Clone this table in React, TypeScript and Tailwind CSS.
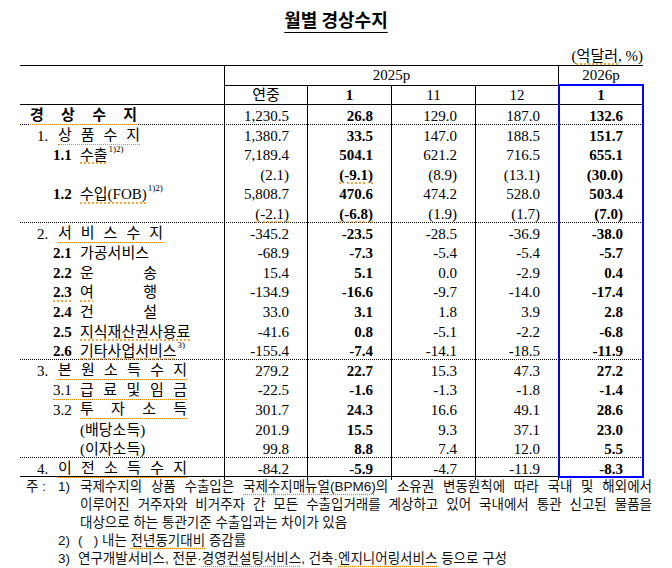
import React from "react";

const SERIF = "[font-family:'Liberation_Serif','Noto_Sans_CJK_KR',serif]";
const SANS = "[font-family:'Liberation_Sans','Noto_Sans_CJK_KR',sans-serif]";
// 맞춤법 검사 표시(주황 점선)
const SQ = "underline decoration-dotted decoration-[#f08a00] underline-offset-[3px]";
const SQB = "border-b border-dotted border-[#f08a00]";

type Sep = "dot" | "solid" | undefined;

interface Row {
  label: React.ReactNode;
  v: string[];
  sep?: Sep;
  sq?: number[];
}

function Spread({ text, w, sq, bold }: { text: string; w: string; sq?: boolean; bold?: boolean }) {
  return (
    <span className={`flex justify-between leading-[17px] ${w} ${sq ? SQB : ""} ${bold ? "font-bold" : ""}`}>
      {Array.from(text).map((c, i) => (
        <span key={i}>{c}</span>
      ))}
    </span>
  );
}

const L1 = ({ n, children }: { n: string; children: React.ReactNode }) => (
  <div className="flex items-center pl-[17px]">
    <span className="w-[21px]">{n}</span>
    {children}
  </div>
);

const L2 = ({ n, children, sqn }: { n?: string; children: React.ReactNode; sqn?: boolean }) => (
  <div className="flex items-center pl-[33px]">
    <span className={`w-[27px] font-bold ${sqn ? SQ : ""}`}>{n}</span>
    {children}
  </div>
);

const Sup = ({ t }: { t: string }) => <span className="text-[9px] relative -top-[6px] ml-[1px]">{t}</span>;

const rows: Row[] = [
  {
    label: (
      <div className="pl-[10px]">
        <Spread text="경상수지" w="w-[107px]" sq bold />
      </div>
    ),
    v: ["1,230.5", "26.8", "129.0", "187.0", "132.6"],
    sep: "dot",
  },
  {
    label: (
      <L1 n="1.">
        <Spread text="상품수지" w="w-[82px]" sq />
      </L1>
    ),
    v: ["1,380.7", "33.5", "147.0", "188.5", "151.7"],
  },
  {
    label: (
      <L2 n="1.1">
        <span className={SQ}>수출</span>
        <Sup t="1)2)" />
      </L2>
    ),
    v: ["7,189.4", "504.1", "621.2", "716.5", "655.1"],
  },
  { label: null, v: ["(2.1)", "(-9.1)", "(8.9)", "(13.1)", "(30.0)"], sq: [1] },
  {
    label: (
      <L2 n="1.2">
        <span className={SQ}>수입(FOB)</span>
        <Sup t="1)2)" />
      </L2>
    ),
    v: ["5,808.7", "470.6", "474.2", "528.0", "503.4"],
  },
  { label: null, v: ["(-2.1)", "(-6.8)", "(1.9)", "(1.7)", "(7.0)"], sep: "dot", sq: [0, 1] },
  {
    label: (
      <L1 n="2.">
        <Spread text="서비스수지" w="w-[105px]" sq />
      </L1>
    ),
    v: ["-345.2", "-23.5", "-28.5", "-36.9", "-38.0"],
  },
  {
    label: (
      <L2 n="2.1">
        <span>가공서비스</span>
      </L2>
    ),
    v: ["-68.9", "-7.3", "-5.4", "-5.4", "-5.7"],
  },
  {
    label: (
      <L2 n="2.2">
        <Spread text="운송" w="w-[77px]" />
      </L2>
    ),
    v: ["15.4", "5.1", "0.0", "-2.9", "0.4"],
  },
  {
    label: (
      <L2 n="2.3" sqn>
        <span className="flex justify-between w-[77px]">
          <span className={SQ}>여</span>
          <span>행</span>
        </span>
      </L2>
    ),
    v: ["-134.9", "-16.6", "-9.7", "-14.0", "-17.4"],
  },
  {
    label: (
      <L2 n="2.4">
        <Spread text="건설" w="w-[77px]" />
      </L2>
    ),
    v: ["33.0", "3.1", "1.8", "3.9", "2.8"],
  },
  {
    label: (
      <L2 n="2.5">
        <span className={SQ}>지식재산권사용료</span>
      </L2>
    ),
    v: ["-41.6", "0.8", "-5.1", "-2.2", "-6.8"],
  },
  {
    label: (
      <L2 n="2.6">
        <span className={SQ}>기타사업서비스</span>
        <Sup t="3)" />
      </L2>
    ),
    v: ["-155.4", "-7.4", "-14.1", "-18.5", "-11.9"],
    sep: "dot",
  },
  {
    label: (
      <L1 n="3.">
        <Spread text="본원소득수지" w="w-[129px]" sq />
      </L1>
    ),
    v: ["279.2", "22.7", "15.3", "47.3", "27.2"],
  },
  {
    label: (
      <div className="flex items-center pl-[33px]">
        <span className={`flex items-center ${SQB}`}>
          <span className="w-[27px] leading-[17px]">3.1</span>
          <Spread text="급료및임금" w="w-[107px]" />
        </span>
      </div>
    ),
    v: ["-22.5", "-1.6", "-1.3", "-1.8", "-1.4"],
  },
  {
    label: (
      <div className="flex items-center pl-[33px]">
        <span className="w-[27px]">3.2</span>
        <Spread text="투자소득" w="w-[107px]" sq />
      </div>
    ),
    v: ["301.7", "24.3", "16.6", "49.1", "28.6"],
  },
  {
    label: (
      <L2>
        <span>(배당소득)</span>
      </L2>
    ),
    v: ["201.9", "15.5", "9.3", "37.1", "23.0"],
  },
  {
    label: (
      <L2>
        <span>(이자소득)</span>
      </L2>
    ),
    v: ["99.8", "8.8", "7.4", "12.0", "5.5"],
    sep: "dot",
  },
  {
    label: (
      <L1 n="4.">
        <Spread text="이전소득수지" w="w-[129px]" sq />
      </L1>
    ),
    v: ["-84.2", "-5.9", "-4.7", "-11.9", "-8.3"],
    sep: "solid",
  },
];

function DataRow({ row }: { row: Row }) {
  const sepCls =
    row.sep === "dot" ? "border-b border-dotted border-black" : row.sep === "solid" ? "border-b border-black" : "";
  return (
    <div className={`grid grid-cols-[205px_83px_84px_84px_83px_84px] h-[19.6px] ${sepCls}`}>
      <div className="border-r border-black flex items-center">{row.label}</div>
      {row.v.map((x, i) => (
        <div
          key={i}
          className={`flex items-center justify-end ${i < 4 ? "border-r border-black pr-[18px]" : "pr-[20px]"} ${
            i === 1 || i === 4 ? "font-bold" : ""
          }`}
        >
          <span className={row.sq && row.sq.includes(i) ? SQ : ""}>{x}</span>
        </div>
      ))}
    </div>
  );
}

export default function App() {
  return (
    <div className={`w-[672px] h-[568px] bg-white text-black overflow-hidden ${SERIF}`}>
      {/* 제목 */}
      <div className="pt-[9px] h-[45px] text-center">
        <span className="text-[18px] leading-[20px] font-bold underline underline-offset-[5px] [font-family:'Noto_Sans_CJK_KR',sans-serif]">
          월별 경상수지
        </span>
      </div>
      <div className="ml-[20px] w-[623px] h-[20px] pt-[2px] text-right text-[15px] leading-[18px]">
        (<span className={SQ}>억달러</span>, %)
      </div>

      {/* 표 */}
      <div className="relative ml-[20px] w-[623px] text-[15px]">
        <div className="grid grid-cols-[205px_83px_84px_84px_83px_84px] grid-rows-[20px_19px] border-t border-black">
          <div className="row-span-2 border-r border-b border-black" />
          <div className="col-span-4 border-r border-b border-black flex items-center justify-center">2025p</div>
          <div className="border-b border-black flex items-center justify-center">2026p</div>
          <div className="border-r border-b border-black flex items-center justify-center">연중</div>
          <div className="border-r border-b border-black flex items-center justify-center font-bold">1</div>
          <div className="border-r border-b border-black flex items-center justify-center">11</div>
          <div className="border-r border-b border-black flex items-center justify-center">12</div>
          <div className="border-b border-black flex items-center justify-center font-bold">1</div>
        </div>
        {rows.map((r, i) => (
          <DataRow key={i} row={r} />
        ))}
        <div className="absolute left-[538px] top-[19px] w-[86px] bottom-[-1px] border-2 border-[#0000ff] pointer-events-none" />
      </div>

      {/* 주석 */}
      <div className={`mt-[1px] text-[13.5px] leading-[18px] text-[#111] ${SANS}`}>
        <div className="flex pl-[26px]">
          <span className="w-[32px]">주 :</span>
          <span className="w-[22px]">1)</span>
          <span className="w-[572px] text-justify [text-align-last:justify]">
            국제수지의 상품 수출입은 <span className={SQ}>국제수지매뉴얼(BPM6)</span>의 소유권 변동원칙에 따라 국내 및 해외에서
          </span>
        </div>
        <div className="pl-[80px]">
          <span className="block w-[572px] text-justify [text-align-last:justify]">
            이루어진 거주자와 비거주자 간 모든 수출입거래를 계상하고 있어 국내에서 통관 신고된 물품을
          </span>
        </div>
        <div className="pl-[80px]">대상으로 하는 통관기준 수출입과는 차이가 있음</div>
        <div className="flex pl-[58px]">
          <span className="w-[20px]">2)</span>
          <span>
            (&nbsp;&nbsp;&nbsp;) 내는 <span className={SQ}>전년동기대비</span> 증감률
          </span>
        </div>
        <div className="flex pl-[58px]">
          <span className="w-[20px]">3)</span>
          <span>
            연구개발서비스, 전문·<span className={SQ}>경영컨설팅서비스</span>, 건축·<span className={SQ}>엔지니어링서비스</span> 등으로 구성
          </span>
        </div>
      </div>
    </div>
  );
}
